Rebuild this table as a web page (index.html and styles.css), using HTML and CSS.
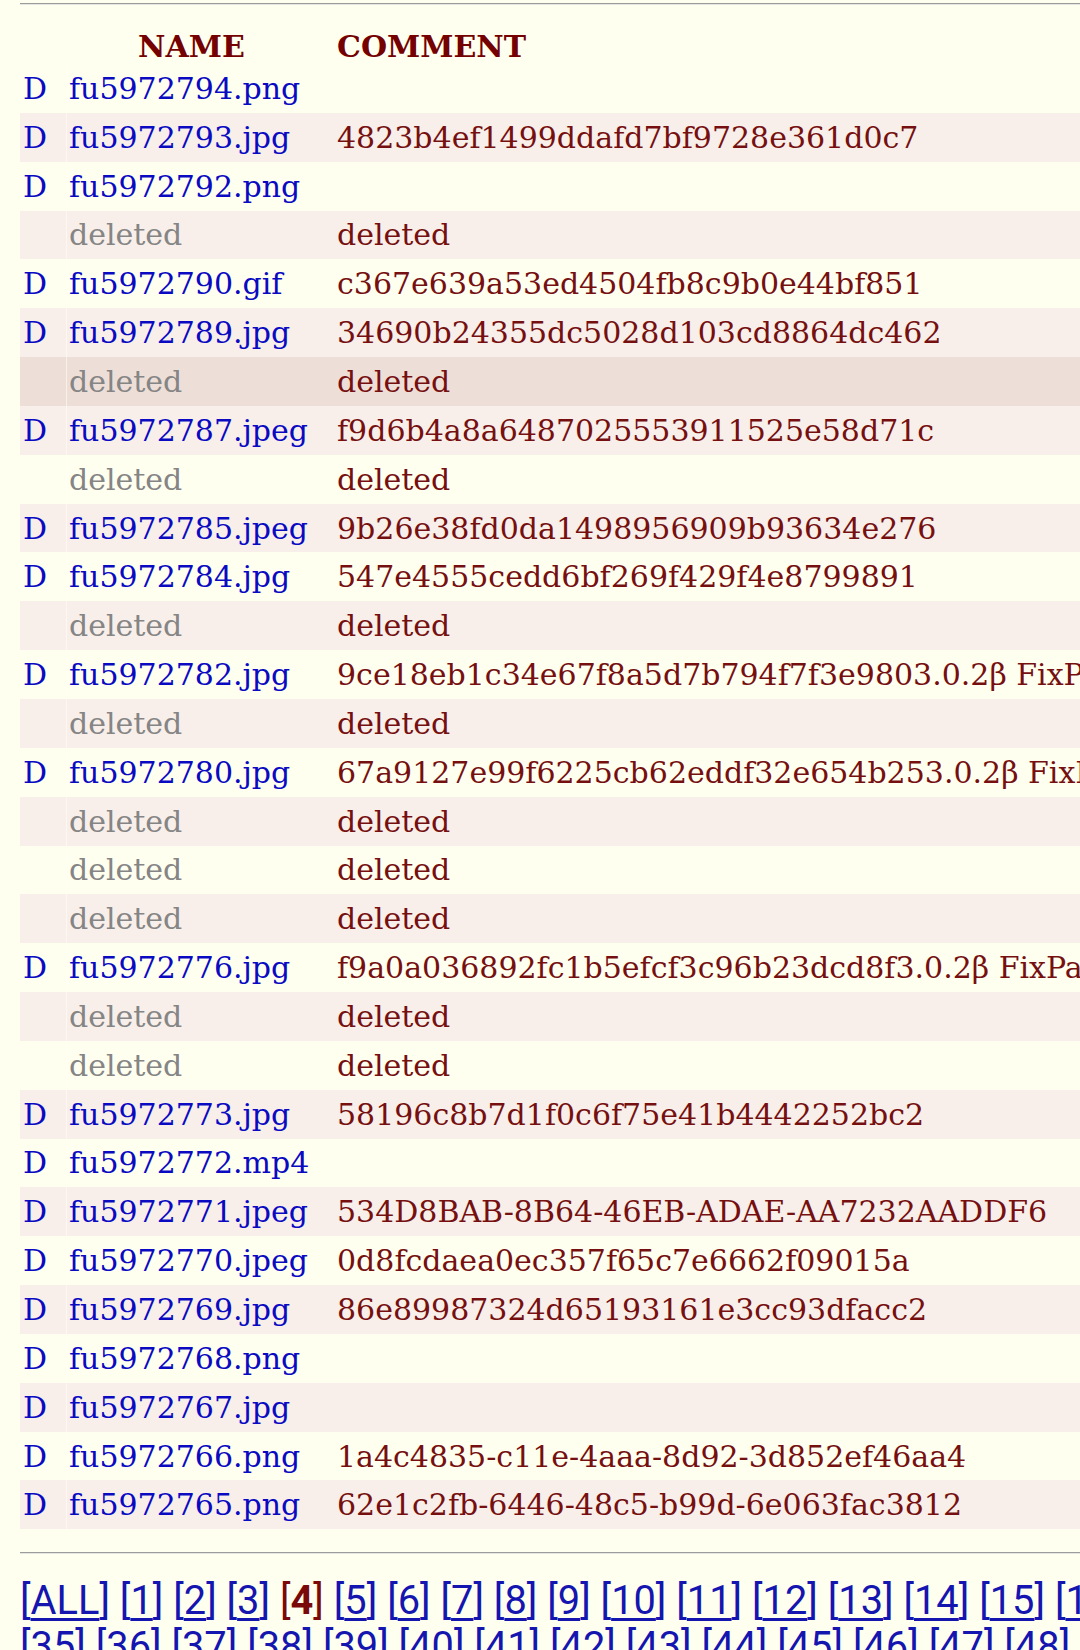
FILE: index.html
```html
<!DOCTYPE html>
<html>
<head>
<meta charset="utf-8">
<link rel="stylesheet" href="styles.css">
</head>
<body>
<div class="page">
  <hr class="rule">
  <table class="files">
    <colgroup><col class="c-del"><col class="c-name"><col class="c-comment"></colgroup>
    <thead>
      <tr><th class="h-del"></th><th class="h-name">NAME</th><th class="h-comment">COMMENT</th></tr>
    </thead>
    <tbody>
      <tr><td class="del"><a href="#">D</a></td><td class="name"><a href="#">fu5972794.png</a></td><td class="comment"></td></tr>
      <tr><td class="del"><a href="#">D</a></td><td class="name"><a href="#">fu5972793.jpg</a></td><td class="comment">4823b4ef1499ddafd7bf9728e361d0c7</td></tr>
      <tr><td class="del"><a href="#">D</a></td><td class="name"><a href="#">fu5972792.png</a></td><td class="comment"></td></tr>
      <tr><td class="del"></td><td class="name gone">deleted</td><td class="comment">deleted</td></tr>
      <tr><td class="del"><a href="#">D</a></td><td class="name"><a href="#">fu5972790.gif</a></td><td class="comment">c367e639a53ed4504fb8c9b0e44bf851</td></tr>
      <tr><td class="del"><a href="#">D</a></td><td class="name"><a href="#">fu5972789.jpg</a></td><td class="comment">34690b24355dc5028d103cd8864dc462</td></tr>
      <tr class="hover"><td class="del"></td><td class="name gone">deleted</td><td class="comment">deleted</td></tr>
      <tr><td class="del"><a href="#">D</a></td><td class="name"><a href="#">fu5972787.jpeg</a></td><td class="comment">f9d6b4a8a6487025553911525e58d71c</td></tr>
      <tr><td class="del"></td><td class="name gone">deleted</td><td class="comment">deleted</td></tr>
      <tr><td class="del"><a href="#">D</a></td><td class="name"><a href="#">fu5972785.jpeg</a></td><td class="comment">9b26e38fd0da1498956909b93634e276</td></tr>
      <tr><td class="del"><a href="#">D</a></td><td class="name"><a href="#">fu5972784.jpg</a></td><td class="comment">547e4555cedd6bf269f429f4e8799891</td></tr>
      <tr><td class="del"></td><td class="name gone">deleted</td><td class="comment">deleted</td></tr>
      <tr><td class="del"><a href="#">D</a></td><td class="name"><a href="#">fu5972782.jpg</a></td><td class="comment">9ce18eb1c34e67f8a5d7b794f7f3e9803.0.2β FixPack</td></tr>
      <tr><td class="del"></td><td class="name gone">deleted</td><td class="comment">deleted</td></tr>
      <tr><td class="del"><a href="#">D</a></td><td class="name"><a href="#">fu5972780.jpg</a></td><td class="comment">67a9127e99f6225cb62eddf32e654b253.0.2β FixPack</td></tr>
      <tr><td class="del"></td><td class="name gone">deleted</td><td class="comment">deleted</td></tr>
      <tr><td class="del"></td><td class="name gone">deleted</td><td class="comment">deleted</td></tr>
      <tr><td class="del"></td><td class="name gone">deleted</td><td class="comment">deleted</td></tr>
      <tr><td class="del"><a href="#">D</a></td><td class="name"><a href="#">fu5972776.jpg</a></td><td class="comment">f9a0a036892fc1b5efcf3c96b23dcd8f3.0.2β FixPack</td></tr>
      <tr><td class="del"></td><td class="name gone">deleted</td><td class="comment">deleted</td></tr>
      <tr><td class="del"></td><td class="name gone">deleted</td><td class="comment">deleted</td></tr>
      <tr><td class="del"><a href="#">D</a></td><td class="name"><a href="#">fu5972773.jpg</a></td><td class="comment">58196c8b7d1f0c6f75e41b4442252bc2</td></tr>
      <tr><td class="del"><a href="#">D</a></td><td class="name"><a href="#">fu5972772.mp4</a></td><td class="comment"></td></tr>
      <tr><td class="del"><a href="#">D</a></td><td class="name"><a href="#">fu5972771.jpeg</a></td><td class="comment">534D8BAB-8B64-46EB-ADAE-AA7232AADDF6</td></tr>
      <tr><td class="del"><a href="#">D</a></td><td class="name"><a href="#">fu5972770.jpeg</a></td><td class="comment">0d8fcdaea0ec357f65c7e6662f09015a</td></tr>
      <tr><td class="del"><a href="#">D</a></td><td class="name"><a href="#">fu5972769.jpg</a></td><td class="comment">86e89987324d65193161e3cc93dfacc2</td></tr>
      <tr><td class="del"><a href="#">D</a></td><td class="name"><a href="#">fu5972768.png</a></td><td class="comment"></td></tr>
      <tr><td class="del"><a href="#">D</a></td><td class="name"><a href="#">fu5972767.jpg</a></td><td class="comment"></td></tr>
      <tr><td class="del"><a href="#">D</a></td><td class="name"><a href="#">fu5972766.png</a></td><td class="comment">1a4c4835-c11e-4aaa-8d92-3d852ef46aa4</td></tr>
      <tr><td class="del"><a href="#">D</a></td><td class="name"><a href="#">fu5972765.png</a></td><td class="comment">62e1c2fb-6446-48c5-b99d-6e063fac3812</td></tr>
    </tbody>
  </table>
  <hr class="rule rule-bottom">
  <p class="pager">[<a href="#">ALL</a>] [<a href="#">1</a>] [<a href="#">2</a>] [<a href="#">3</a>] <span class="current">[<b>4</b>]</span> [<a href="#">5</a>] [<a href="#">6</a>] [<a href="#">7</a>] [<a href="#">8</a>] [<a href="#">9</a>] [<a href="#">10</a>] [<a href="#">11</a>] [<a href="#">12</a>] [<a href="#">13</a>] [<a href="#">14</a>] [<a href="#">15</a>] [<a href="#">16</a>] [<a href="#">17</a>] [<a href="#">18</a>] [<a href="#">19</a>] [<a href="#">20</a>] [<a href="#">21</a>] [<a href="#">22</a>] [<a href="#">23</a>] [<a href="#">24</a>] [<a href="#">25</a>] [<a href="#">26</a>] [<a href="#">27</a>] [<a href="#">28</a>] [<a href="#">29</a>] [<a href="#">30</a>] [<a href="#">31</a>] [<a href="#">32</a>] [<a href="#">33</a>] [<a href="#">34</a>] [<a href="#">35</a>] [<a href="#">36</a>] [<a href="#">37</a>] [<a href="#">38</a>] [<a href="#">39</a>] [<a href="#">40</a>] [<a href="#">41</a>] [<a href="#">42</a>] [<a href="#">43</a>] [<a href="#">44</a>] [<a href="#">45</a>] [<a href="#">46</a>] [<a href="#">47</a>] [<a href="#">48</a>] [<a href="#">49</a>] [<a href="#">50</a>] [<a href="#">51</a>] [<a href="#">52</a>] [<a href="#">53</a>] [<a href="#">54</a>] [<a href="#">55</a>] [<a href="#">56</a>] [<a href="#">57</a>] [<a href="#">58</a>] [<a href="#">59</a>] [<a href="#">60</a>]</p>
</div>
</body>
</html>
```

FILE: styles.css
```css
html {
  overflow: hidden;
  background: #fffff0;
}
body {
  margin: 0;
  background: #fffff0;
  font-family: "DejaVu Serif", serif;
}
.page {
  width: 2520px;
  padding: 3px 0 0 20px;
}
.rule {
  margin: 0;
  height: 0;
  border: 0;
  border-top: 1px solid #9c9c9c;
  border-bottom: 1px solid #e6e6e0;
}
.files {
  width: 100%;
  table-layout: fixed;
  border-collapse: separate;
  border-spacing: 0;
  margin-top: 12px;
  font-size: 30px;
}
.c-del { width: 47px; }
.c-name { width: 249px; }
.files th {
  height: 47px;
  padding: 0;
  color: #740000;
  font-weight: bold;
  vertical-align: bottom;
}
.files th.h-comment {
  text-align: left;
  padding-left: 21px;
}
.files td {
  height: 48.85px;
  padding: 0;
  white-space: nowrap;
  overflow: visible;
  vertical-align: middle;
}
.files tbody tr:nth-child(even) td { background: #f8efea; }
.files tbody tr.hover td { background: #eddfd8; }
.files td.del {
  padding-left: 3px;
  border-right: 1px solid rgba(255, 255, 244, 0.55);
}
.files td.name { padding-left: 2px; }
.files td.comment {
  padding-left: 21px;
  color: #761010;
}
.files a {
  color: #0a0ac2;
  text-decoration: none;
}
.files td.gone { color: #858585; }
.rule-bottom { margin-top: 23px; }
.pager {
  margin: 24px 0 0 0;
  font-family: Roboto, sans-serif;
  font-size: 39.8px;
  line-height: 46px;
  color: #1515b0;
}
.pager a {
  color: #1515b0;
  text-decoration: underline;
  text-underline-offset: 4px;
  text-decoration-thickness: 2.5px;
}
.pager .current {
  color: #7a0a0a;
}
```
